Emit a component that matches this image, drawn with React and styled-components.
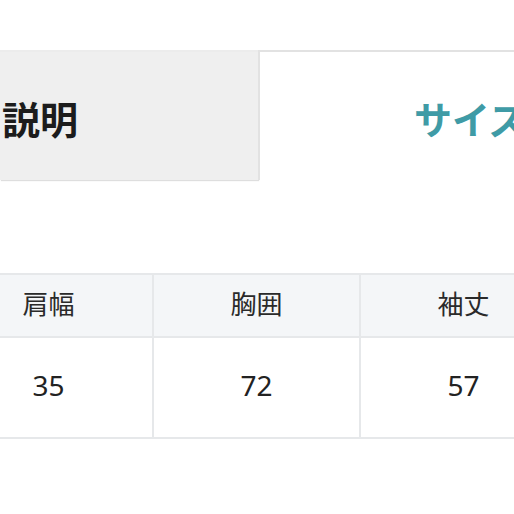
import styled, { createGlobalStyle } from "styled-components";

const GlobalStyle = createGlobalStyle`
    html, body {
        margin: 0;
        padding: 0;
        background: #ffffff;
        overflow: hidden;
    }
    body {
        font-family: "Noto Sans CJK JP", "Noto Sans", sans-serif;
        color: #222;
    }
`;

const columns = [
    { label: "肩幅", value: "35" },
    { label: "胸囲", value: "72" },
    { label: "袖丈", value: "57" },
];

const App = () => {
    return (
        <>
            <GlobalStyle />
            <Page>
                <Tabs>
                    <Tab>説明</Tab>
                    <Tab $active>サイズ</Tab>
                </Tabs>

                <Table>
                    {columns.map((c) => (
                        <HeadCell key={c.label}>{c.label}</HeadCell>
                    ))}
                    {columns.map((c) => (
                        <Cell key={c.label}>{c.value}</Cell>
                    ))}
                </Table>
            </Page>
        </>
    );
};

export default App;

const Page = styled.div`
    width: 514px;
    height: 514px;
    overflow: hidden;
    padding-top: 50px;
    box-sizing: border-box;
`;

const Tabs = styled.div`
    display: flex;
    height: 130px;
`;

const Tab = styled.div`
    flex: 0 0 ${(p) => (p.$active ? "430px" : "258px")};
    box-sizing: border-box;
    display: flex;
    align-items: center;
    padding-left: ${(p) => (p.$active ? "154px" : "2px")};
    padding-top: 2px;
    font-size: 38px;
    font-weight: 700;
    white-space: nowrap;
    background: ${(p) => (p.$active ? "#ffffff" : "#efefef")};
    color: ${(p) => (p.$active ? "#3f9ba6" : "#1c1c1c")};
    border-top: 2px solid ${(p) => (p.$active ? "#e2e2e2" : "#ececec")};
    border-left: ${(p) => (p.$active ? "2px solid #e2e2e2" : "none")};
    box-shadow: ${(p) => (p.$active ? "none" : "1px 1px 1px #dedede")};
`;

const Table = styled.div`
    display: grid;
    grid-template-columns: repeat(3, 207px);
    grid-template-rows: 63px 99px;
    margin-left: -55px;
    margin-top: 93px;
    border-top: 2px solid #e6e8ea;
    border-bottom: 2px solid #e6e8ea;
    width: max-content;
`;

const HeadCell = styled.div`
    display: flex;
    align-items: center;
    justify-content: center;
    background: #f4f6f8;
    border-left: 2px solid #e6e8ea;
    border-bottom: 2px solid #e6e8ea;
    font-size: 26px;
    color: #2a2a2a;
    padding-bottom: 7px;

    &:first-child {
        border-left: none;
    }
`;

const Cell = styled.div`
    display: flex;
    align-items: center;
    justify-content: center;
    background: #ffffff;
    border-left: 2px solid #e6e8ea;
    font-family: "Noto Sans", sans-serif;
    font-size: 28px;
    color: #222;
    padding-bottom: 6px;

    &:nth-child(4) {
        border-left: none;
    }
`;
